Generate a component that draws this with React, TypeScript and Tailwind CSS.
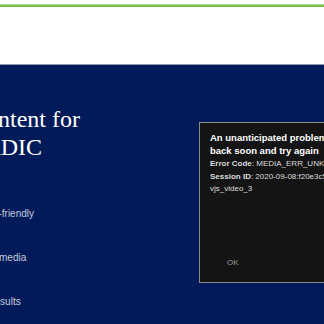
const features = ["Mobile-friendly", "Social media", "Fast results"];

const ErrorDialog = () => {
    return (
        <div className="flex flex-col h-[161px] border border-[#8c8c8c] bg-[#141414] pl-[10px] pt-[8px] overflow-hidden whitespace-nowrap font-['Liberation_Sans',Arial,sans-serif]">
            <div className="text-[9.5px] leading-[13px] font-bold text-white">
                <div>An unanticipated problem was encountered, check</div>
                <div>back soon and try again</div>
            </div>
            <div className="text-[8px] leading-[12.5px] text-[#dcdcdc] pt-px">
                <div>
                    <span className="font-bold">Error Code</span>: MEDIA_ERR_UNKNOWN
                </div>
                <div>
                    <span className="font-bold">Session ID</span>: 2020-09-08:f20e3c5d8a1b7e9f
                </div>
                <div>vjs_video_3</div>
            </div>
            <div className="mt-auto mb-[13px] ml-[17px] text-[8px] leading-[12px] text-[#9a9a9a]">
                OK
            </div>
        </div>
    );
};

export default function App() {
    return (
        <div className="w-[324px] h-[324px] overflow-hidden bg-white">
            <div className="h-[4px] bg-white" />
            <div className="h-px bg-[#bcd9a4]" />
            <div className="h-[2px] bg-[#79c142]" />
            <div className="h-[57px] bg-white" />
            <div className="h-px bg-[#8e97b2]" />
            <div className="flex h-[259px] bg-[#011b5a]">
                <div className="w-[199px] shrink-0 overflow-hidden">
                    <h1 className="mt-[40px] ml-[-50px] indent-[20px] text-[24px] leading-[28px] font-normal text-white font-['Liberation_Serif',serif]">
                        Content for
                        <br />
                        NORDIC
                    </h1>
                    <ul className="mt-[47px] ml-[-31px] flex flex-col gap-[32px] whitespace-nowrap text-[10px] leading-[12px] text-[#c6cadb] font-['Liberation_Sans',Arial,sans-serif]">
                        {features.map((f) => (
                            <li key={f}>{f}</li>
                        ))}
                    </ul>
                </div>
                <div className="flex-1 pt-[57px]">
                    <ErrorDialog />
                </div>
            </div>
        </div>
    );
}
